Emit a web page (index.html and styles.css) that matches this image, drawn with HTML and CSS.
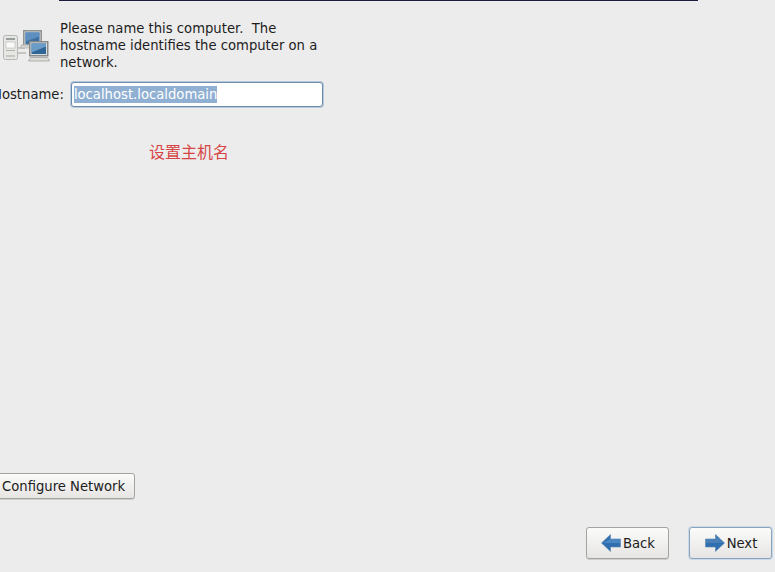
FILE: index.html
```html
<!DOCTYPE html>
<html lang="en">
<head>
<meta charset="utf-8">
<title>Hostname</title>
<link rel="stylesheet" href="styles.css">
</head>
<body>
<main class="screen">
  <div class="top-rule"></div>
  <section class="intro">
    <svg class="net-icon" width="52" height="38" viewBox="0 0 52 38">
      <rect x="3.500" y="8.500" width="14" height="24" rx="2" fill="#e6e6e2" stroke="#b4b7b4"/>
      <rect x="6" y="11" width="9" height="2" fill="#9a9e9c"/>
      <rect x="6" y="15" width="9" height="6" fill="#fafafa" stroke="#b5b8b5" stroke-width=".6"/>
      <rect x="6" y="23" width="9" height="1" fill="#b0b3b0"/>
      <rect x="6" y="28" width="9" height="2" fill="#c5c7c4"/>
      <path d="M18 21h7M18 26h8" stroke="#c4c6c4" stroke-width="2" fill="none"/>
      <rect x="23.750" y="3.750" width="17.500" height="15.500" fill="#d5d7d8" stroke="#8f9391" stroke-width="1.500"/>
      <rect x="25.500" y="5.500" width="14" height="12" fill="#3f70a3"/>
      <path d="M25.500 5.500h14v4l-14 5z" fill="#5d8fc0"/>
      <rect x="21" y="18" width="9" height="3" fill="#d6d6d2" stroke="#a5a8a5" stroke-width=".6"/>
      <rect x="29.750" y="14.750" width="18" height="14" fill="#dcdedf" stroke="#858a88" stroke-width="1.500"/>
      <rect x="31.500" y="16.500" width="14.500" height="10.500" fill="#2f6597"/>
      <path d="M31.500 16.500h14.500v3l-14.500 6z" fill="#6b9bc7"/>
      <path d="M30.500 30.500h17l2 3.500h-21z" fill="#dcdcd8" stroke="#a0a3a1" stroke-width=".8"/>
    </svg>
    <p class="intro-text">Please name this computer.&nbsp; The hostname identifies the computer on a network.</p>
  </section>
  <section class="host-row">
    <label class="host-label" for="hostname">Hostname:</label>
    <div class="host-input" id="hostname"><span class="selected">localhost.localdomain</span></div>
  </section>
  <p class="note">设置主机名</p>
  <div class="spacer"></div>
  <button class="btn btn-config" type="button">Configure Network</button>
  <nav class="nav">
    <button class="btn btn-nav" type="button">
      <svg width="20" height="18" viewBox="0 0 20 18"><path d="M9.500 .5v4.500h10v8h-10v4.500L.5 9z" fill="#2f6fb0" stroke="#5c87b2" stroke-width=".6"/><path d="M9 5h10v4H2z" fill="#4a86c0"/></svg>
      <span>Back</span>
    </button>
    <button class="btn btn-nav btn-next" type="button">
      <svg width="20" height="18" viewBox="0 0 20 18"><path d="M10.500 .5v4.500H.5v8h10v4.500L19.500 9z" fill="#2f6fb0" stroke="#5c87b2" stroke-width=".6"/><path d="M1 5h10V1l7 8H1z" fill="#4a80b8"/></svg>
      <span>Next</span>
    </button>
  </nav>
</main>
</body>
</html>
```
FILE: styles.css
```css
html, body {
  margin: 0;
  height: 100%;
  overflow: hidden;
  background: #edecec;
}
.screen {
  height: 572px;
  box-sizing: border-box;
  display: flex;
  flex-direction: column;
  font-family: "DejaVu Sans", sans-serif;
  font-size: 13.2px;
  line-height: 17px;
  color: #1c1c1c;
}
.top-rule {
  width: 639px;
  height: 1px;
  margin-left: 59px;
  background: #1c1c3c;
}
.intro {
  display: flex;
  align-items: flex-start;
  margin-top: 19px;
}
.net-icon {
  flex: none;
  margin-top: 7px;
  margin-right: 8px;
}
.intro-text {
  margin: 0;
  width: 265px;
}
.host-row {
  display: flex;
  align-items: center;
  margin-top: 11px;
  margin-left: -8px;
}
.host-label {
  margin-right: 7px;
}
.host-input {
  width: 246px;
  height: 23px;
  padding: 0 2px;
  border: 1px solid #6d8bab;
  border-radius: 3px;
  background: #fff;
  box-shadow: 0 0 0 1px #b7c9dc;
  display: flex;
  align-items: center;
}
.selected {
  background: #8fafd3;
  color: #fff;
}
.note {
  margin: 34px 0 0 149px;
  font-family: "Noto Sans CJK SC", sans-serif;
  font-size: 16px;
  line-height: 20px;
  color: #d64545;
}
.spacer {
  flex: 1;
}
.btn {
  font: inherit;
  color: inherit;
  border: 1px solid #a3a3a0;
  border-radius: 3px;
  background: linear-gradient(#fbfbfa, #e6e5e3);
  box-shadow: 0 1px 0 #cfcece;
  padding: 0;
}
.btn-config {
  align-self: flex-start;
  width: 140px;
  height: 26px;
  margin-left: -5px;
  padding-left: 6px;
  text-align: left;
}
.nav {
  display: flex;
  justify-content: flex-end;
  gap: 20px;
  margin-top: 28px;
  margin-bottom: 13px;
  padding-right: 3px;
}
.btn-nav {
  width: 83px;
  height: 32px;
  display: flex;
  align-items: center;
  justify-content: center;
  gap: 2px;
  padding-left: 1px;
}
.btn-next {
  border-color: #8aa4bf;
  box-shadow: 0 0 0 1px #cbd8e5;
}
```
